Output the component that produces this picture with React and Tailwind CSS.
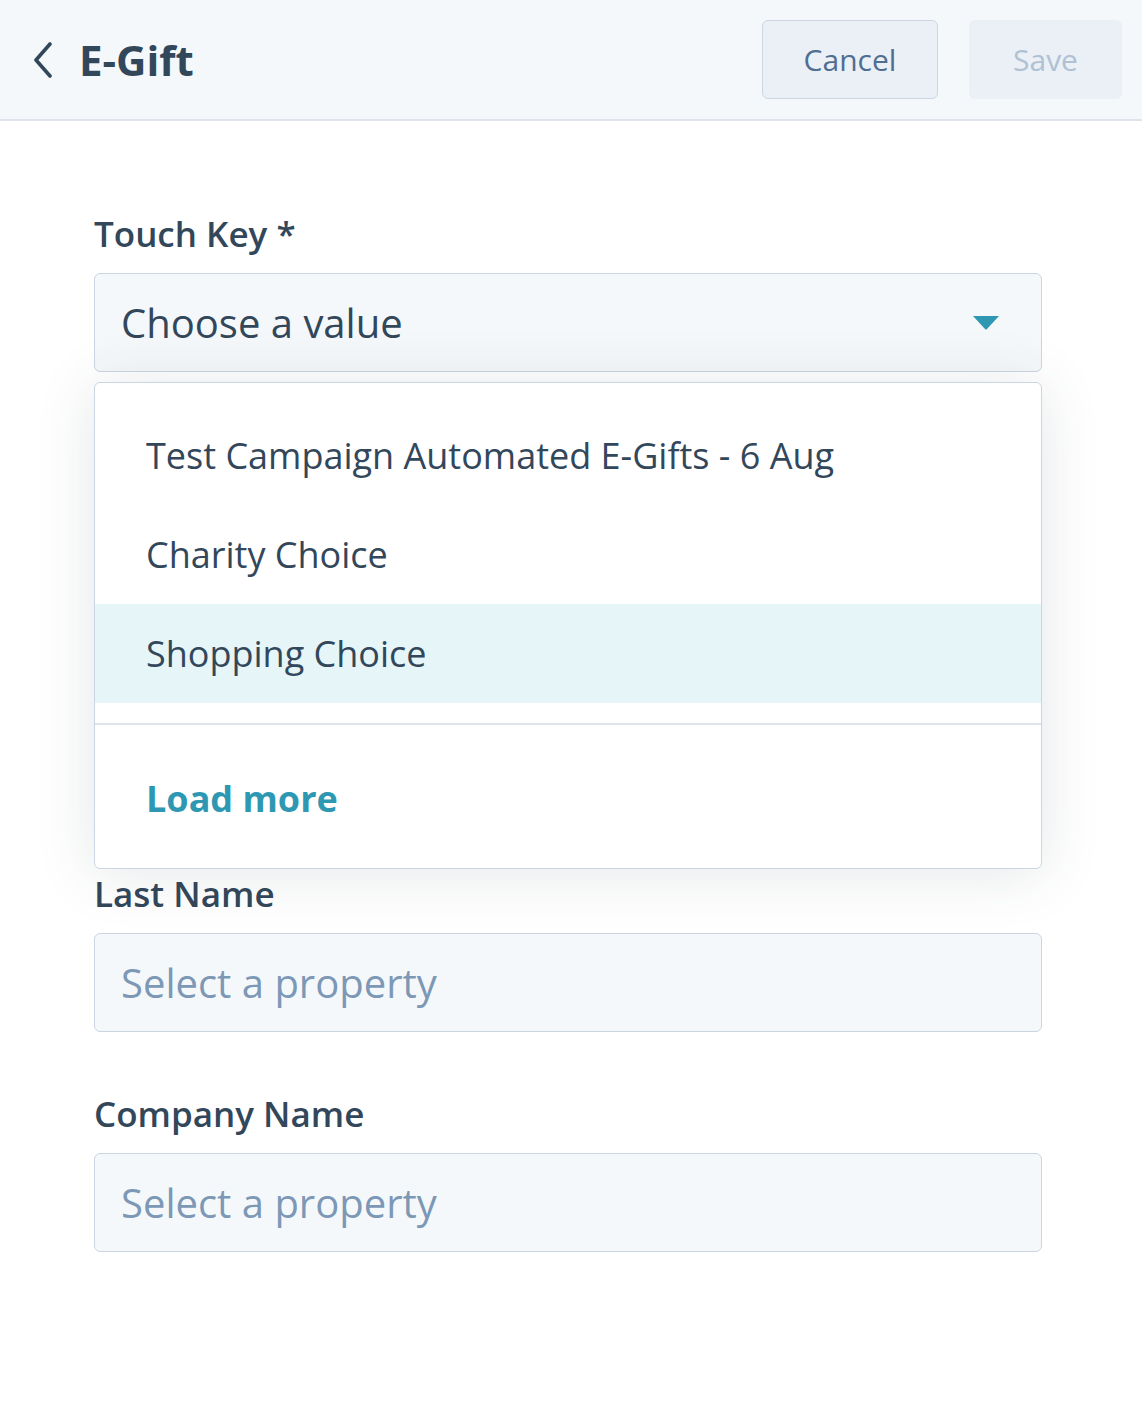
import React from 'react'

const font = { fontFamily: '"Open Sans", "Noto Sans", sans-serif' }

const options = [
    { label: 'Test Campaign Automated E-Gifts - 6 Aug' },
    { label: 'Charity Choice' },
    { label: 'Shopping Choice', active: true },
]

// Property select used for the contact fields
const PropertyField = ({ label, className = '' }) => (
    <div className={className}>
        <p className='h-10 leading-10 text-[35px] font-semibold text-[#33475b] mb-[19px]'>{label}</p>
        <div className='h-[99px] flex items-center px-[26px] bg-[#f5f8fa] border border-[#cbd6e2] rounded-md'>
            <span className='text-[40px] text-[#7c98b6]'>Select a property</span>
        </div>
    </div>
)

const App = () => {
    return (
        <div className='min-h-[1424px] w-[1142px] bg-white' style={font}>
            {/* --- HEADER --- */}
            <div className='h-[121px] flex items-center justify-between pl-[33px] pr-[20px] bg-[#f5f8fa] border-b-2 border-[#dfe3eb]'>
                <div className='flex items-center gap-[26px]'>
                    <svg width='20' height='36' viewBox='0 0 20 36' fill='none'>
                        <path d='M17 2 L3 18 L17 34' stroke='#33475b' strokeWidth='3.6' strokeLinecap='round' strokeLinejoin='round' />
                    </svg>
                    <h1 className='text-[42px] font-bold text-[#33475b] leading-none'>E-Gift</h1>
                </div>
                <div className='flex items-center gap-[31px]'>
                    <button className='w-[176px] h-[79px] rounded-md border border-[#cbd6e2] bg-[#eaf0f6] text-[30px] text-[#506e91]'>
                        Cancel
                    </button>
                    <button className='w-[153px] h-[79px] rounded-md bg-[#eaf0f6] text-[30px] text-[#b0c1d4]'>
                        Save
                    </button>
                </div>
            </div>

            {/* --- FORM --- */}
            <div className='pl-[94px] pt-[93px] w-[1042px]'>
                <div className='relative z-10'>
                    <p className='h-10 leading-10 text-[35px] font-semibold text-[#33475b] mb-[19px]'>Touch Key *</p>
                    <div className='h-[99px] flex items-center justify-between pl-[26px] pr-[41px] bg-[#f5f8fa] border border-[#cbd6e2] rounded-md'>
                        <span className='text-[40px] text-[#33475b]'>Choose a value</span>
                        <svg width='28' height='15' viewBox='0 0 28 15'>
                            <path d='M1 1 L27 1 L15 14 Q14 15 13 14 Z' fill='#2e98b3' />
                        </svg>
                    </div>

                    {/* Dropdown menu, open */}
                    <div className='absolute left-0 right-0 top-full mt-[10px] bg-white border border-[#cbd6e2] rounded-md shadow-[0_4px_60px_rgba(45,62,80,0.13)]'>
                        <div className='pt-[23px] pb-[20px]'>
                            {options.map((opt) => (
                                <div
                                    key={opt.label}
                                    className={`h-[99px] flex items-center pl-[51px] text-[36px] text-[#33475b] ${opt.active ? 'bg-[#e5f5f8]' : ''}`}
                                >
                                    {opt.label}
                                </div>
                            ))}
                        </div>
                        <div className='border-t-2 border-[#dfe3eb] pt-[52px] pb-[47px] pl-[51px]'>
                            <span className='block h-11 leading-[44px] text-[36px] font-bold text-[#2e98b3]'>Load more</span>
                        </div>
                    </div>
                </div>

                {/* fields hidden behind the open menu */}
                <div className='h-[440px]'></div>

                <PropertyField label='Last Name' className='mt-[62px]' />
                <PropertyField label='Company Name' className='mt-[62px]' />
            </div>
        </div>
    )
}

export default App
